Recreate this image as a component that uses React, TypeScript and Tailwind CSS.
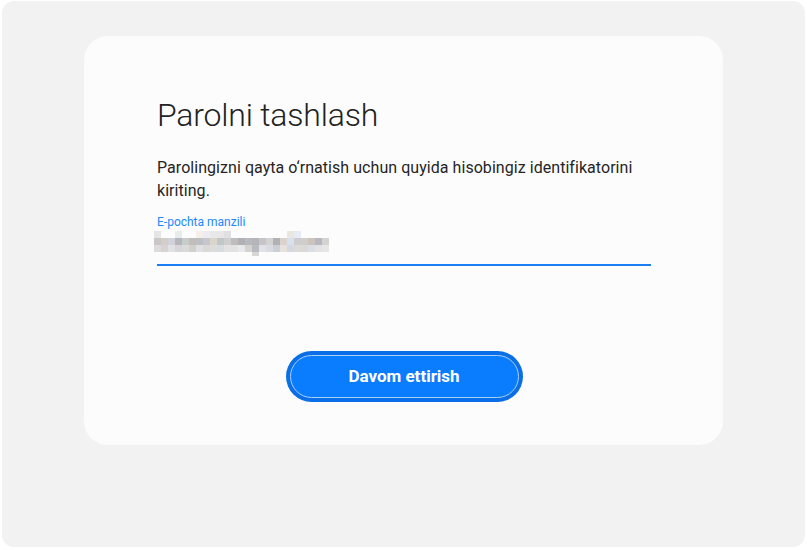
import React from 'react';

const rows: (string | null)[][] = [
  ['#e5e5e8', null, null, '#eaeceb', null, null, '#f5efe8', '#eceaf2', '#e9e8e9', '#e8e6e7', '#e0dfe2', null, null, null, null, null, null, null, null, '#ece6e0', '#e6ecf5', null, null, null, null],
  ['#cbc7c6', '#d3cec9', '#d0d4da', '#b5b7bc', '#c9cccc', '#c4bcb9', '#bcbfc4', '#c6c6cc', '#dcd5cc', '#c1c6c8', '#cfcfd0', '#c2bbbb', '#b0b0b5', '#b7b9bc', '#b3b5b8', '#c6c4c8', '#d4d2d2', '#b0b2b6', '#dad2cc', '#d8e2ec', '#cdcdd0', '#d0cdcc', '#cbc4bd', '#b5b8c0', '#d3d3d2'],
  ['#dcdcdd', '#d8d3cf', '#dfe1e4', '#d7d5da', '#dadada', '#d2d0cb', '#e0e0e2', '#dad9d8', '#dcdcdc', '#d7dcdf', '#e4e2e2', '#e3e2e2', '#e8e9eb', '#d5d2d2', '#b8bbc0', '#e2e2e4', '#d8dbe0', '#cbd0d6', '#e7e2dd', '#d5d9df', '#dcdbda', '#dbd9d6', '#dbdee4', '#e3e3e3', '#e6e6e6'],
  [null, null, null, null, null, null, null, null, null, null, null, null, null, null, '#d9d6d6', null, null, null, null, null, null, null, null, null, null],
];

function MaskedValue() {
  return (
    <div className="flex flex-col">
      {rows.map((row, i) => (
        <div key={i} className={i === 3 ? 'flex h-[4px]' : 'flex h-[7px]'}>
          {row.map((c, j) => (
            <div key={j} className="w-[7px] h-full" style={{ background: c ?? 'transparent' }} />
          ))}
        </div>
      ))}
    </div>
  );
}

export default function App() {
  return (
    <div className="w-[807px] h-[550px] bg-white pt-[1px] px-[2px] font-['Roboto',sans-serif]">
      <div className="h-[546px] rounded-[12px] bg-[#f2f2f2] pt-[35px] px-[82px]">
        <div className="h-[409px] rounded-[24px] bg-[#fcfcfc] pl-[73px] pr-[72px] pt-[59px]">
          <h1 className="text-[32px] leading-[40px] font-light text-[#222] tracking-[-0.2px]">Parolni tashlash</h1>
          <p className="mt-[21px] text-[16px] leading-[23px] text-[#252525] tracking-[0.05px]">
            Parolingizni qayta o‘rnatish uchun quyida hisobingiz identifikatorini kiriting.
          </p>
          <div className="mt-[13px]">
            <div className="text-[12px] leading-[14px] text-[#2189ff]">E-pochta manzili</div>
            <div className="pt-[2px] -ml-[3px] h-[35px]">
              <MaskedValue />
            </div>
            <div className="h-[2px] bg-[#1a7ff5]" />
          </div>
          <div className="mt-[85px] flex justify-center">
            <button className="w-[237px] h-[51px] rounded-[26px] bg-[#0a6fe6] p-[4px]">
              <div className="w-full h-full rounded-[22px] border border-[#a9d0fa] bg-[#0a7dff] flex items-center justify-center text-white text-[17px] font-bold">
                Davom ettirish
              </div>
            </button>
          </div>
        </div>
      </div>
    </div>
  );
}
